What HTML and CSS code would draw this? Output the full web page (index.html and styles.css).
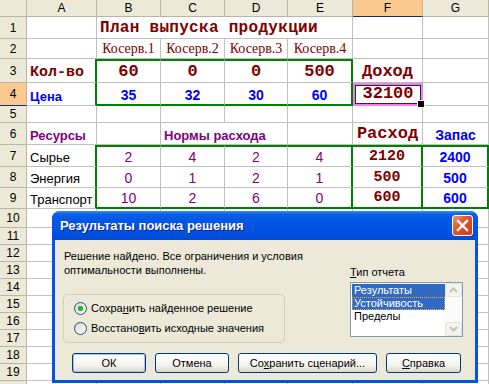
FILE: index.html
```html
<!DOCTYPE html>
<html>
<head>
    <meta charset="UTF-8" />
    <title>Поиск решения</title>
    <link rel="stylesheet" href="styles.css">
</head>
<body>
<div class="sheet">
    <div class="hd"></div><div class="hd">A</div><div class="hd">B</div><div class="hd">C</div><div class="hd">D</div><div class="hd">E</div><div class="hd hsel">F</div><div class="hd">G</div>

    <div class="rh">1</div><div></div><div class="l span4 dr mono title">План выпуска продукции</div><div></div><div></div>

    <div class="rh">2</div><div></div><div class="dr serif">Косерв.1</div><div class="dr serif">Косерв.2</div><div class="dr serif">Косерв.3</div><div class="dr serif">Косерв.4</div><div></div><div></div>

    <div class="rh">3</div><div class="l dr mono m15 gr">Кол-во</div><div class="dr mono m17 gt">60</div><div class="dr mono m17 gt">0</div><div class="dr mono m17 gt">0</div><div class="dr mono m17 gt gr">500</div><div class="dr mono m17">Доход</div><div></div>

    <div class="rh hsel">4</div><div class="l bl b gr">Цена</div><div class="bl b gb">35</div><div class="bl b gb">32</div><div class="bl b gb">30</div><div class="bl b gb gr">60</div><div class="dr mono m17 act">32100</div><div></div>

    <div class="rh">5</div><div></div><div></div><div></div><div></div><div></div><div></div><div></div>

    <div class="rh">6</div><div class="l pu b">Ресурсы</div><div></div><div class="l span2 pu b">Нормы расхода</div><div></div><div class="dr mono m17">Расход</div><div class="bl b">Запас</div>

    <div class="rh">7</div><div class="l gr">Сырье</div><div class="pu gt">2</div><div class="pu gt">4</div><div class="pu gt">2</div><div class="pu gt gr">4</div><div class="dr mono m15 gt gr">2120</div><div class="bl b gt gr">2400</div>

    <div class="rh">8</div><div class="l gr">Энергия</div><div class="pu">0</div><div class="pu">1</div><div class="pu">2</div><div class="pu gr">1</div><div class="dr mono m15 gr">500</div><div class="bl b gr">500</div>

    <div class="rh">9</div><div class="l gr">Транспорт</div><div class="pu gb">10</div><div class="pu gb">2</div><div class="pu gb">6</div><div class="pu gb gr">0</div><div class="dr mono m15 gb gr">600</div><div class="bl b gb gr">600</div>

    <div class="rh">10</div><div></div><div></div><div></div><div></div><div></div><div></div><div></div>
    <div class="rh">11</div><div></div><div></div><div></div><div></div><div></div><div></div><div></div>
    <div class="rh">12</div><div></div><div></div><div></div><div></div><div></div><div></div><div></div>
    <div class="rh">13</div><div></div><div></div><div></div><div></div><div></div><div></div><div></div>
    <div class="rh">14</div><div></div><div></div><div></div><div></div><div></div><div></div><div></div>
    <div class="rh">15</div><div></div><div></div><div></div><div></div><div></div><div></div><div></div>
    <div class="rh">16</div><div></div><div></div><div></div><div></div><div></div><div></div><div></div>
    <div class="rh">17</div><div></div><div></div><div></div><div></div><div></div><div></div><div></div>
    <div class="rh">18</div><div></div><div></div><div></div><div></div><div></div><div></div><div></div>
    <div class="rh">19</div><div></div><div></div><div></div><div></div><div></div><div></div><div></div>
    <div class="rh"></div><div></div><div></div><div></div><div></div><div></div><div></div><div></div>
</div>

<div class="dlg">
    <div class="cap">
        <span>Результаты поиска решения</span>
        <div class="close">
            <svg width="19" height="19" viewBox="0 0 19 19">
                <path d="M5 5 L14 14 M14 5 L5 14" stroke="#fff" stroke-width="2.4" stroke-linecap="square"/>
            </svg>
        </div>
    </div>
    <div class="body">
        <div class="top">
            <div class="left">
                <p class="msg">Решение найдено. Все ограничения и условия<br>оптимальности выполнены.</p>
                <div class="grp">
                    <div class="rad"><span class="dot on"></span><span>Сохра<u>н</u>ить найденное решение</span></div>
                    <div class="rad"><span class="dot"></span><span>Восстано<u>в</u>ить исходные значения</span></div>
                </div>
            </div>
            <div class="right">
                <div class="lbl"><u>Т</u>ип отчета</div>
                <div class="list">
                    <div class="items">
                        <div class="it on">Результаты</div>
                        <div class="it on focus">Устойчивость</div>
                        <div class="it">Пределы</div>
                    </div>
                    <div class="sb">
                        <div class="arr"><svg width="9" height="6" viewBox="0 0 9 6"><path d="M1 5 L4.5 1.5 L8 5" fill="none" stroke="#c3c1b5" stroke-width="2"/></svg></div>
                        <div class="arr"><svg width="9" height="6" viewBox="0 0 9 6"><path d="M1 1 L4.5 4.5 L8 1" fill="none" stroke="#c3c1b5" stroke-width="2"/></svg></div>
                    </div>
                </div>
            </div>
        </div>
        <div class="btns">
            <div class="btn def">ОК</div>
            <div class="btn">Отмена</div>
            <div class="btn wide"><span>Со<u>х</u>ранить сценарий...</span></div>
            <div class="btn w75"><span><u>С</u>правка</span></div>
        </div>
    </div>
</div>
</body>
</html>
```

FILE: styles.css
```css
*{
    margin: 0;
    padding: 0;
    box-sizing: border-box;
}
body{
    width: 489px;
    height: 384px;
    overflow: hidden;
    position: relative;
    background: #fff;
    font-family: "Liberation Sans", Arial, sans-serif;
    font-size: 13px;
}

/* sheet */
.sheet{
    display: grid;
    grid-template-columns: 27px 70px 64px 64px 63px 65px 70px 66px;
    grid-template-rows: 17px 22px 20px 24px 23px 17px 22px 22px 21px 21px 19px repeat(10, 17px);
}
.sheet > div{
    border-right: 1px solid #c0c0c0;
    border-bottom: 1px solid #c0c0c0;
    display: flex;
    align-items: flex-end;
    justify-content: center;
    white-space: nowrap;
    padding-bottom: 1px;
}
.sheet > .hd, .sheet > .rh{
    background: #ece9d8;
    border-color: #b9b6a5;
    font-size: 12px;
    align-items: center;
    padding-bottom: 0;
}
.sheet > .hsel{
    background: #fbc88e;
    border-bottom-color: #1f2a78;
}
.sheet > .l{
    justify-content: flex-start;
    padding-left: 3px;
}
.sheet > .span4{grid-column: span 4;}
.sheet > .span2{grid-column: span 2;}
.sheet > .gt{border-top: 2px solid #008000;}
.sheet > .gr{border-right: 2px solid #008000;}
.sheet > .gb{border-bottom: 2px solid #008000;}
.sheet > .act{
    position: relative;
    border: 2px solid #f27ff2;
    box-shadow: inset 0 0 0 1px #2a2a2a;
}
.sheet > .act::after{
    content: "";
    position: absolute;
    right: -4px;
    bottom: -4px;
    width: 6px;
    height: 6px;
    background: #000;
    border: 1px solid #fff;
}

.dr{color: #800000;}
.bl{color: #0000ff;}
.pu{color: #800080;}
.b{font-weight: bold;}
.b, .pu{font-size: 14px;}
.sheet > .l.b, .sheet > .l.pu{font-size: 13px;}
.mono{
    font-family: "Liberation Mono", "Courier New", monospace;
    font-weight: bold;
}
.title{
    font-size: 16px;
    letter-spacing: 0.3px;
}
.m15{font-size: 15px;}
.m17{font-size: 17px;}
.serif{
    font-family: "Liberation Serif", "Times New Roman", serif;
    font-size: 14px;
}

/* dialog */
.dlg{
    position: absolute;
    left: 52px;
    top: 211px;
    width: 426px;
    height: 172px;
    background: #0553e0;
    border-radius: 8px 8px 0 0;
    display: flex;
    flex-direction: column;
    overflow: hidden;
}
.cap{
    height: 29px;
    display: flex;
    align-items: center;
    justify-content: space-between;
    padding: 0 5px 0 8px;
    background: linear-gradient(#3d8ef8 0, #0a62e6 3px, #0058e6 9px, #0054e3 60%, #004ad8 100%);
    color: #fff;
    font-weight: bold;
    font-size: 13px;
    text-shadow: 1px 1px #0d2190;
}
.close{
    width: 21px;
    height: 21px;
    border: 1px solid #fff;
    border-radius: 3px;
    background: linear-gradient(135deg, #f09478 0, #e2562f 40%, #c93a12 100%);
    display: flex;
}
.body{
    flex: 1;
    margin: 0 3px 3px;
    background: #ece9d8;
    padding: 9px 0 0 8px;
    font-size: 11px;
    color: #000;
}
.top{display: flex;}
.left{width: 287px;}
.msg{
    line-height: 14px;
    padding-left: 1px;
}
.grp{
    width: 222px;
    height: 49px;
    margin-top: 17px;
    border: 1px solid #d0d0bf;
    border-radius: 4px;
    padding: 3px 0 0 10px;
}
.rad{
    height: 20px;
    display: flex;
    align-items: center;
    gap: 4px;
}
.dot{
    width: 13px;
    height: 13px;
    border: 1px solid #1c5180;
    border-radius: 50%;
    background: linear-gradient(135deg, #d8d7cf, #fff);
}
.dot.on{
    background: radial-gradient(circle, #2db42d 0 2.4px, transparent 3px), linear-gradient(135deg, #d8d7cf, #fff);
}
.right{padding-top: 16px;}
.lbl{line-height: 14px;}
.list{
    margin-top: 3px;
    width: 113px;
    height: 55px;
    border: 1px solid #7f9db9;
    background: #fff;
    display: flex;
}
.items{flex: 1; padding: 1px 0 0 1px;}
.it{
    height: 13px;
    line-height: 13px;
    padding-left: 2px;
}
.it.on{
    background: #316ac5;
    color: #fff;
}
.it.focus{outline: 1px dotted #f3a540; outline-offset: -1px;}
.sb{
    width: 17px;
    display: flex;
    flex-direction: column;
    justify-content: space-between;
    background: #fbfbf9;
}
.arr{
    height: 14px;
    border: 1px solid #e6e5dd;
    border-radius: 2px;
    background: #f4f3ee;
    display: flex;
    align-items: center;
    justify-content: center;
}
.btns{
    display: flex;
    gap: 9px;
    margin: 10px 0 0 9px;
}
.btn{
    width: 74px;
    height: 20px;
    border: 1px solid #003c74;
    border-radius: 3px;
    background: linear-gradient(#ffffff, #f4f4ef 60%, #dcd8cc);
    display: flex;
    align-items: center;
    justify-content: center;
}
.btn.def{box-shadow: inset 0 0 0 1px #a9c3ef;}
.btn.wide{width: 139px;}
.btn.w75{width: 75px;}
```
